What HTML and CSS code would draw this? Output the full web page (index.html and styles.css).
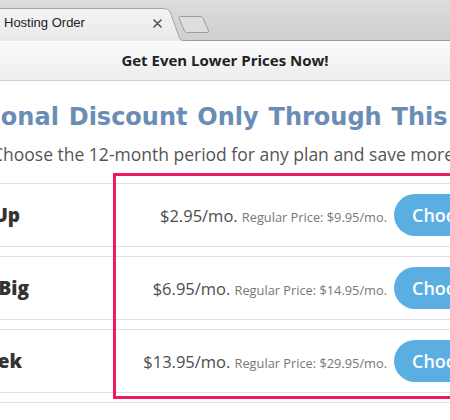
FILE: index.html
```html
<!DOCTYPE html>
<html lang="en">
<head>
<meta charset="utf-8">
<title>Hosting Order</title>
<link rel="stylesheet" href="styles.css">
</head>
<body>
<div class="tabbar">
  <div class="tab">
    <svg class="tab-shape" width="186" height="33" viewBox="0 0 186 33">
      <defs>
        <linearGradient id="tg" x1="0" y1="0" x2="0" y2="1">
          <stop offset="0" stop-color="#f4f4f4"/>
          <stop offset="1" stop-color="#e9e9e9"/>
        </linearGradient>
      </defs>
      <path d="M-2,33 L-2,0.5 L163,0.5 C167,0.5 169.5,2 170.5,5 L179.5,30 C180.5,32 182,32.5 185,32.5 L185,33 Z" fill="url(#tg)"/>
      <path d="M-2,0.5 L163,0.5 C167,0.5 169.5,2 170.5,5 L179.5,30 C180.5,32 182,32.5 185,32.5" fill="none" stroke="#a3a3a3" stroke-width="1"/>
    </svg>
    <span class="tab-title">Hosting Order</span>
    <svg class="tab-close" width="9" height="9" viewBox="0 0 9 9">
      <path d="M1,1 L8,8 M8,1 L1,8" stroke="#555" stroke-width="1.6" stroke-linecap="round"/>
    </svg>
  </div>
  <svg class="newtab" width="34" height="19" viewBox="0 0 34 19">
    <path d="M3.5,1.5 L23,1.5 C24.5,1.5 25.5,2.2 26,3.2 L31.5,15.5 C32,16.8 31.3,17.5 30,17.5 L10.5,17.5 C9,17.5 8,16.8 7.5,15.8 L2,3.5 C1.5,2.2 2.2,1.5 3.5,1.5 Z" fill="#dedede" stroke="#9c9c9c" stroke-width="1"/>
  </svg>
</div>
<div class="banner">Get Even Lower Prices Now!</div>
<main class="content">
  <h1 class="headline"><span>Additional Discount Only Through This Link</span></h1>
  <p class="sub"><span>Choose the 12-month period for any plan and save more!</span></p>
  <div class="plans">
    <div class="row">
      <div class="name n1"><span>Start Up</span></div>
      <div class="price"><span class="now">$2.95/mo.</span> <span class="reg">Regular Price: $9.95/mo.</span></div>
      <button class="choose">Choose</button>
    </div>
    <div class="row">
      <div class="name n2"><span>Go Big</span></div>
      <div class="price"><span class="now">$6.95/mo.</span> <span class="reg">Regular Price: $14.95/mo.</span></div>
      <button class="choose">Choose</button>
    </div>
    <div class="row">
      <div class="name n3"><span>Geek</span></div>
      <div class="price"><span class="now">$13.95/mo.</span> <span class="reg">Regular Price: $29.95/mo.</span></div>
      <button class="choose">Choose</button>
    </div>
    <div class="row stub"></div>
    <div class="highlight"></div>
  </div>
</main>
</body>
</html>
```

FILE: styles.css
```css
* { box-sizing: border-box; margin: 0; padding: 0; }
html, body { width: 450px; height: 420px; overflow: hidden; background: #fff; }
body { font-family: "Open Sans", "Liberation Sans", sans-serif; }

.tabbar {
  height: 41px;
  background: linear-gradient(#dddddd, #cfcfcf);
  border-bottom: 1px solid #9b9b9b;
  display: flex;
  align-items: flex-start;
}
.tab {
  position: relative;
  width: 186px;
  height: 32px;
  margin-top: 8px;
  display: flex;
  align-items: flex-start;
  padding: 7px 0 0 4px;
}
.tab-shape { position: absolute; left: 0; top: 0; }
.tab-title {
  position: relative;
  font: 13px/15px "Liberation Sans", Arial, sans-serif;
  color: #222;
}
.tab-close { position: relative; margin: 4px 0 0 auto; margin-right: 24px; }
.newtab { margin: 15px 0 0 -9px; }

.banner {
  height: 40px;
  background: linear-gradient(#fbfbfb, #ededed);
  border-bottom: 1px solid #cfcfcf;
  font: 700 15px/39px "Open Sans", sans-serif;
  color: #222;
  text-align: center;
}

.headline {
  margin-top: 21px;
  display: flex;
  white-space: nowrap;
  font: bold 24px/30px "DejaVu Sans", sans-serif;
  word-spacing: 1.5px;
  color: #6a8db6;
}
.headline span { margin-left: -80px; }
.sub {
  margin-top: 10px;
  display: flex;
  white-space: nowrap;
  font: 17.5px/24px "Open Sans", sans-serif;
  color: #555;
}
.sub span { margin-left: -8px; }

.plans { position: relative; margin-top: 17px; width: 560px; }
.row {
  height: 64px;
  border-top: 1px solid #e2e2e2;
  border-bottom: 1px solid #e2e2e2;
  margin-bottom: 9px;
  display: flex;
  align-items: center;
}
.row.stub { margin-top: 8px; }
.name {
  width: 113px;
  flex: none;
  display: flex;
  justify-content: flex-end;
  overflow: hidden;
  white-space: nowrap;
  font: 800 19px/24px "Open Sans", sans-serif;
  color: #333;
}
.name span { flex: none; }
.n1 { padding-right: 93px; }
.n2 { padding-right: 84px; }
.n3 { padding-right: 91px; }
.price {
  width: 281px;
  flex: none;
  padding-right: 7px;
  text-align: right;
  white-space: nowrap;
  color: #4d4d4d;
}
.now { font-size: 16.5px; }
.reg { font-size: 12.8px; color: #777; }
.choose {
  flex: none;
  height: 42px;
  border: none;
  border-radius: 21px;
  background: #5aaee2;
  color: #fff;
  font: 600 18px/42px "Open Sans", sans-serif;
  padding: 0 18px;
}
.highlight {
  position: absolute;
  left: 113px;
  top: -10px;
  width: 420px;
  height: 226px;
  border: 3px solid #ec1a66;
}
```
